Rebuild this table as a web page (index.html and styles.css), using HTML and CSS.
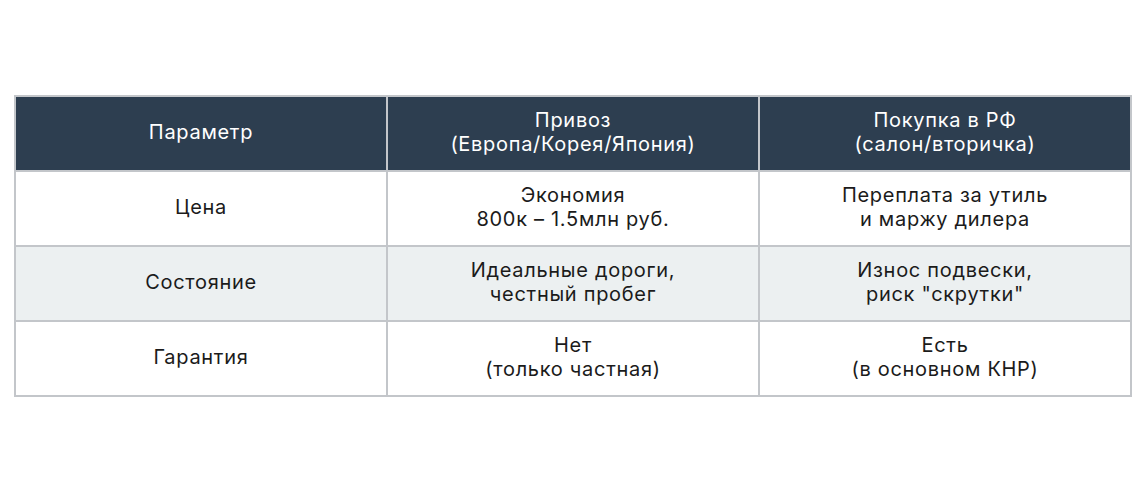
FILE: index.html
```html
<!DOCTYPE html>
<html lang="ru">
<head>
<meta charset="utf-8">
<title>Сравнение</title>
<link rel="stylesheet" href="styles.css">
</head>
<body>
<main class="page">
  <table class="compare">
    <colgroup><col class="c"><col class="c"><col class="c"></colgroup>
    <thead>
      <tr>
        <th>Параметр</th>
        <th>Привоз<br>(Европа/Корея/Япония)</th>
        <th>Покупка в РФ<br>(салон/вторичка)</th>
      </tr>
    </thead>
    <tbody>
      <tr>
        <td>Цена</td>
        <td>Экономия<br>800к – 1.5млн руб.</td>
        <td>Переплата за утиль<br>и маржу дилера</td>
      </tr>
      <tr class="alt">
        <td>Состояние</td>
        <td>Идеальные дороги,<br>честный пробег</td>
        <td>Износ подвески,<br>риск "скрутки"</td>
      </tr>
      <tr>
        <td>Гарантия</td>
        <td>Нет<br>(только частная)</td>
        <td>Есть<br>(в основном КНР)</td>
      </tr>
    </tbody>
  </table>
</main>
</body>
</html>
```

FILE: styles.css
```css
html, body {
  margin: 0;
  padding: 0;
  background: #ffffff;
}
.page {
  box-sizing: border-box;
  height: 492px;
  padding: 0 14px;
  display: flex;
  align-items: center;
}
.compare {
  width: 100%;
  table-layout: fixed;
  border-collapse: collapse;
  font-family: Inter, Roboto, "Liberation Sans", sans-serif;
  font-size: 20px;
  line-height: 24px;
  letter-spacing: 0.7px;
  color: #1b1b1b;
}
.compare th,
.compare td {
  border: 2px solid #c3c6ca;
  height: 70px;
  padding: 0 12px 3px;
  text-align: center;
  vertical-align: middle;
  font-weight: 400;
}
.compare th {
  background: #2d3e50;
  color: #ffffff;
}
.compare tr.alt td {
  background: #ecf0f1;
}
```
